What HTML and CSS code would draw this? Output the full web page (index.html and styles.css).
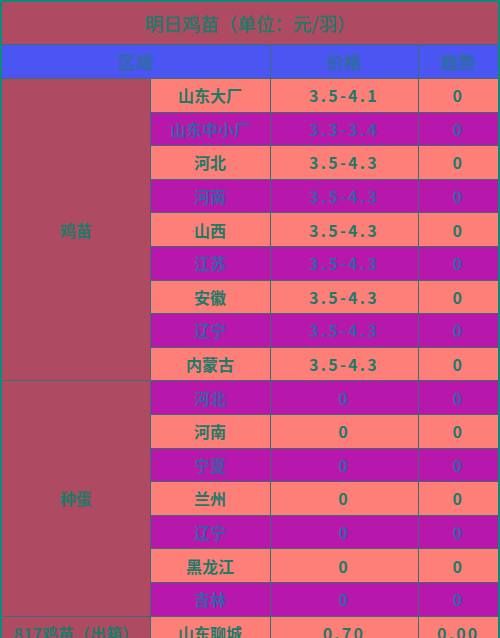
FILE: index.html
```html
<!DOCTYPE html>
<html lang="zh">
<head>
<meta charset="utf-8">
<link rel="stylesheet" href="styles.css">
</head>
<body>
<div class="frame">
<table class="price">
  <colgroup>
    <col class="c1"><col class="c2"><col class="c3"><col class="c4">
  </colgroup>
  <tr class="title"><td colspan="4">明日鸡苗（单位：元/羽）</td></tr>
  <tr class="head"><td colspan="2">区域</td><td>价格</td><td>趋势</td></tr>
  <tr class="a"><td class="grp" rowspan="9">鸡苗</td><td>山东大厂</td><td class="num">3.5-4.1</td><td class="num">0</td></tr>
  <tr class="b"><td>山东中小厂</td><td class="num">3.3-3.4</td><td class="num">0</td></tr>
  <tr class="a"><td>河北</td><td class="num">3.5-4.3</td><td class="num">0</td></tr>
  <tr class="b"><td>河南</td><td class="num">3.5-4.3</td><td class="num">0</td></tr>
  <tr class="a"><td>山西</td><td class="num">3.5-4.3</td><td class="num">0</td></tr>
  <tr class="b"><td>江苏</td><td class="num">3.5-4.3</td><td class="num">0</td></tr>
  <tr class="a"><td>安徽</td><td class="num">3.5-4.3</td><td class="num">0</td></tr>
  <tr class="b"><td>辽宁</td><td class="num">3.5-4.3</td><td class="num">0</td></tr>
  <tr class="a"><td>内蒙古</td><td class="num">3.5-4.3</td><td class="num">0</td></tr>
  <tr class="b"><td class="grp" rowspan="7">种蛋</td><td>河北</td><td class="num">0</td><td class="num">0</td></tr>
  <tr class="a"><td>河南</td><td class="num">0</td><td class="num">0</td></tr>
  <tr class="b"><td>宁夏</td><td class="num">0</td><td class="num">0</td></tr>
  <tr class="a"><td>兰州</td><td class="num">0</td><td class="num">0</td></tr>
  <tr class="b"><td>辽宁</td><td class="num">0</td><td class="num">0</td></tr>
  <tr class="a"><td>黑龙江</td><td class="num">0</td><td class="num">0</td></tr>
  <tr class="b"><td>吉林</td><td class="num">0</td><td class="num">0</td></tr>
  <tr class="a"><td class="grp">817鸡苗（出箱）</td><td>山东聊城</td><td class="num">0.70</td><td class="num">0.00</td></tr>
</table>
</div>
</body>
</html>
```
FILE: styles.css
```css
html, body {
  margin: 0;
  padding: 0;
  background: #0f8a7a;
}
.frame {
  width: 500px;
  height: 638px;
  overflow: hidden;
  background: #0f8a7a;
  padding: 2px 3px 0 2px;
  box-sizing: border-box;
}
.price {
  border-collapse: collapse;
  table-layout: fixed;
  width: 496px;
  font-family: "Noto Sans CJK SC", "Noto Sans", sans-serif;
  font-weight: bold;
  font-size: 16px;
  color: #1f7a68;
}
.c1 { width: 148px; }
.c2 { width: 120px; }
.c3 { width: 148px; }
.c4 { width: 80px; }
.price td {
  border: 1px solid #3d6c72;
  padding: 0;
  text-align: center;
  vertical-align: middle;
  height: 32.6px;
  line-height: 20px;
  white-space: nowrap;
  overflow: hidden;
}
.price tr:first-child td { border-top: none; }
.price td:first-child { border-left: none; }
.price td:last-child { border-right: none; }
.title td {
  background: #ae4a62;
  height: 42px;
  font-size: 18.5px;
  font-weight: normal;
  -webkit-text-stroke: 0.4px #1f7a68;
  color: #1f7a68;
}
.head td {
  background: #4a55f2;
  height: 33px;
  font-size: 17.5px;
  color: #2c6f9a;
  font-weight: normal;
  -webkit-text-stroke: 0.4px #2c6f9a;
}
.a td { background: #fe7f78; color: #1f7a68; }
.b td { background: #b817ab; color: #3562a6; }
.price td.grp {
  background: #ae4a62;
  color: #1f7a68;
}
.num {
  letter-spacing: 2.3px;
}
```
